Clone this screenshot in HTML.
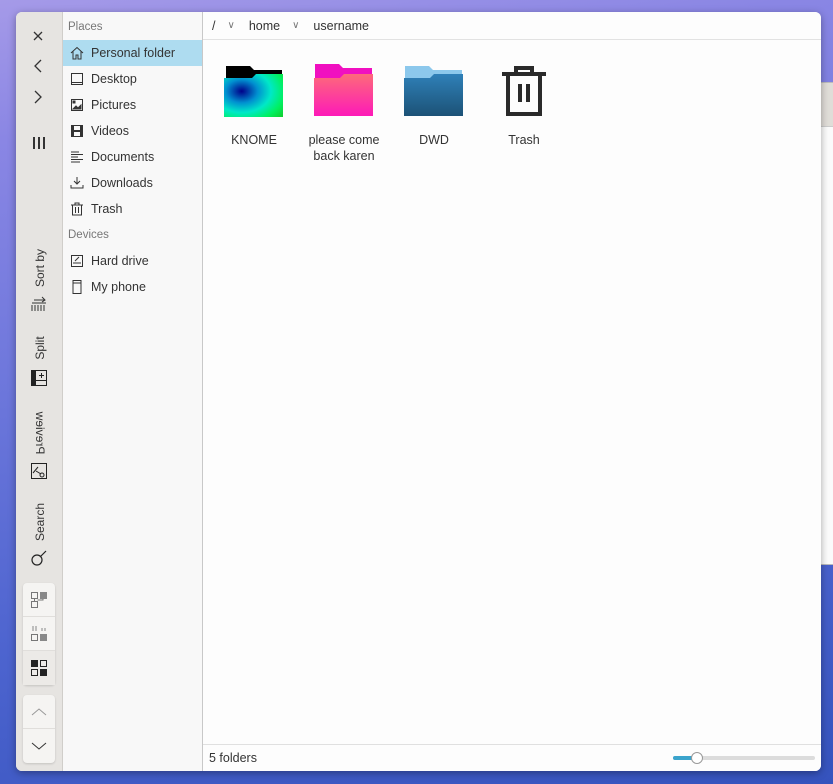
<!DOCTYPE html>
<html><head><meta charset="utf-8"><style>
*{box-sizing:border-box;margin:0;padding:0}
body{width:833px;height:784px;overflow:hidden;position:relative;font-family:"Liberation Sans","DejaVu Sans",sans-serif;font-size:12.5px;color:#333;
background:linear-gradient(170deg,#a59ae8 0%,#8a86e4 15%,#6f78dc 40%,#4d64cf 70%,#3553bd 100%);}
.bgwin{position:absolute;left:818px;top:82px;width:20px;height:483px;background:#fbfbfb;border:1px solid #bbb}
.bgwin .h{height:44px;background:#e0ddd8;border-bottom:1px solid #ccc}
.win{position:absolute;left:16px;top:12px;width:805px;height:759px;border-radius:6px;overflow:hidden;background:#fdfdfd;box-shadow:0 2px 8px rgba(0,0,0,.35)}
.tb{position:absolute;left:0;top:0;width:47px;height:100%;background:#e6e4e1;border-right:1px solid #d0ceca}
.side{position:absolute;left:47px;top:0;width:140px;height:100%;background:#f8f8f8;border-right:1px solid #c8c8c8}
.main{position:absolute;left:187px;top:0;right:0;bottom:0;background:#fdfdfd}
.sec{color:#777;font-size:11.5px;padding:9px 0 0 5px;height:28px}
.it{height:26px;display:flex;align-items:center;padding-left:7px;font-size:12.5px}
.it.sel{background:#aedcf0}
.it svg{width:14px;height:14px;margin-right:7px}
.vt{position:absolute;left:24px;transform:translate(-50%,-50%) rotate(-90deg);white-space:nowrap;font-size:12px;color:#333}
.ic{position:absolute;left:15px}
.grp{position:absolute;left:7px;width:32px;background:#f5f4f2;border-radius:4px;box-shadow:0 1px 2px rgba(0,0,0,.15)}
.grp div{height:34px;border-bottom:1px solid #e0dedb;display:flex;align-items:center;justify-content:center}
.crumb{height:28px;border-bottom:1px solid #e2e2e2;display:flex;align-items:center;font-size:12.5px;padding-left:9px}
.f{position:absolute;top:52px;width:80px;text-align:center;font-size:12.5px;line-height:16px}
.status{position:absolute;left:0;right:0;bottom:0;height:27px;border-top:1px solid #e0e0e0;font-size:12.5px;padding:6px 0 0 6px}
</style></head><body>
<div class="bgwin"><div class="h"></div></div>
<div class="win">
 <div class="tb">
  <svg class="ic" style="top:17px" width="14" height="14" viewBox="0 0 14 14" stroke="#333" stroke-width="1.3"><path d="M3 3L11 11M11 3L3 11"/></svg>
  <svg class="ic" style="top:46px" width="14" height="16" viewBox="0 0 14 16" fill="none" stroke="#333" stroke-width="1.3"><path d="M10 2L4 8L10 14"/></svg>
  <svg class="ic" style="top:77px" width="14" height="16" viewBox="0 0 14 16" fill="none" stroke="#333" stroke-width="1.3"><path d="M4 2L10 8L4 14"/></svg>
  <svg class="ic" style="top:124px" width="16" height="14" viewBox="0 0 16 14" stroke="#333" stroke-width="2"><path d="M3 1V13M8 1V13M13 1V13"/></svg>
  <div class="vt" style="top:256px">Sort by</div>
  <svg class="ic" style="top:284px" width="16" height="16" viewBox="0 0 16 16" fill="none" stroke="#333" stroke-width="1"><path d="M1 7H15M1 9V15M4 9V15M7 9V15M10 9V15M13 9V15M3 4H14M11 1L14 4L11 6"/></svg>
  <div class="vt" style="top:336px">Split</div>
  <svg class="ic" style="top:358px" width="16" height="16" viewBox="0 0 16 16"><rect x="0.5" y="0.5" width="15" height="15" fill="none" stroke="#222"/><rect x="0" y="0" width="5" height="16" fill="#222"/><rect x="0" y="10" width="16" height="1" fill="#222"/><path d="M10.5 3V8M8 5.5H13" stroke="#222"/></svg>
  <div class="vt" style="top:421px;transform:translate(-50%,-50%) rotate(90deg) scaleX(-1)">Preview</div>
  <svg class="ic" style="top:451px" width="16" height="16" viewBox="0 0 16 16" fill="none" stroke="#222"><rect x="0.5" y="0.5" width="15" height="15"/><path d="M2 10L7 4M5 8L10 11"/><circle cx="11" cy="12" r="2"/></svg>
  <div class="vt" style="top:510px">Search</div>
  <svg class="ic" style="top:538px" width="16" height="16" viewBox="0 0 16 16" fill="none" stroke="#222" stroke-width="1.2"><circle cx="6" cy="10" r="5"/><path d="M9.5 6.5L15 1"/></svg>
  <div class="grp" style="top:571px">
   <div><svg width="16" height="16" viewBox="0 0 16 16"><rect x="0.5" y="0.5" width="6" height="6" fill="none" stroke="#777"/><rect x="9" y="0" width="7" height="7" fill="#888"/><rect x="0.5" y="9.5" width="6" height="6" fill="none" stroke="#777"/><path d="M3.5 7V9M6.5 8H12V7" stroke="#777" fill="none"/></svg></div>
   <div><svg width="16" height="16" viewBox="0 0 16 16"><path d="M2 0V5M5 0V5M11 2V5M14 2V5" stroke="#888"/><rect x="0.5" y="8.5" width="6" height="6" fill="none" stroke="#777"/><rect x="9" y="8" width="7" height="7" fill="#888"/></svg></div>
   <div style="border:none;background:#eceae7"><svg width="16" height="16" viewBox="0 0 16 16"><rect x="0" y="0" width="7" height="7" fill="#222"/><rect x="9.5" y="0.5" width="6" height="6" fill="none" stroke="#222"/><rect x="0.5" y="9.5" width="6" height="6" fill="none" stroke="#222"/><rect x="9" y="9" width="7" height="7" fill="#222"/></svg></div>
  </div>
  <div class="grp" style="top:683px">
   <div><svg width="16" height="10" viewBox="0 0 16 10" fill="none" stroke="#999"><path d="M1 8L8 2L15 8"/></svg></div>
   <div style="border:none"><svg width="16" height="10" viewBox="0 0 16 10" fill="none" stroke="#333"><path d="M1 2L8 8L15 2"/></svg></div>
  </div>
 </div>
 <div class="side">
  <div class="sec">Places</div>
  <div class="it sel"><svg viewBox="0 0 14 14" fill="none" stroke="#333"><path d="M1 7L7 1.5L13 7M3 5.5V13H6V9H8V13H11V5.5"/></svg>Personal folder</div>
  <div class="it"><svg viewBox="0 0 14 14" fill="none" stroke="#333"><rect x="1.5" y="1.5" width="11" height="11"/><path d="M1.5 10.5H12.5"/></svg>Desktop</div>
  <div class="it"><svg viewBox="0 0 14 14" fill="none" stroke="#333"><rect x="1.5" y="1.5" width="11" height="11"/><path d="M3 11L6 8L8 10L11 7V11Z" fill="#333"/><rect x="3" y="3" width="2" height="2" fill="#333"/></svg>Pictures</div>
  <div class="it"><svg viewBox="0 0 14 14"><rect x="1" y="1" width="12" height="12" fill="#333"/><rect x="4" y="2" width="6" height="4" fill="#f8f8f8"/><rect x="4" y="8" width="6" height="4" fill="#f8f8f8"/></svg>Videos</div>
  <div class="it"><svg viewBox="0 0 14 14" stroke="#333"><path d="M1 2H9M1 4.5H13M1 7H8M1 9.5H13M1 12H10"/></svg>Documents</div>
  <div class="it"><svg viewBox="0 0 14 14" fill="none" stroke="#333"><path d="M7 1V8M4 5L7 8L10 5M1 9V12H13V9"/></svg>Downloads</div>
  <div class="it"><svg viewBox="0 0 14 14" fill="none" stroke="#333"><path d="M1 3H13M5 3V1H9V3M2.5 3V13H11.5V3M5.5 5V11M8.5 5V11"/></svg>Trash</div>
  <div class="sec" style="padding-top:7px;height:26px">Devices</div>
  <div class="it"><svg viewBox="0 0 14 14" fill="none" stroke="#333"><rect x="1.5" y="1.5" width="11" height="11"/><path d="M3 9H11M5 7L9 3"/></svg>Hard drive</div>
  <div class="it"><svg viewBox="0 0 14 14" fill="none" stroke="#333"><rect x="3" y="0.5" width="8" height="13"/><path d="M3 3H11"/></svg>My phone</div>
 </div>
 <div class="main">
  <div class="crumb"><span>/</span><span style="margin:0 14px 0 12px;color:#777;font-size:10px">&#8744;</span><span>home</span><span style="margin:0 14px 0 12px;color:#777;font-size:10px">&#8744;</span><span>username</span></div>
  <div class="f" style="left:11px">
   <svg width="60" height="54" viewBox="0 0 60 54"><defs><radialGradient id="k" cx="0.3" cy="0.4" r="0.9"><stop offset="0" stop-color="#00008a"/><stop offset="0.3" stop-color="#0090d0"/><stop offset="0.55" stop-color="#00e8c8"/><stop offset="0.8" stop-color="#00f060"/><stop offset="1" stop-color="#10d030"/></radialGradient></defs><path d="M2 2H26L30 6H58V18H2Z" fill="#000"/><path d="M0 14H28L32 10H59V53H0Z" fill="url(#k)"/></svg>
   <div style="margin-top:10px">KNOME</div></div>
  <div class="f" style="left:101px">
   <svg width="60" height="54" viewBox="0 0 60 54"><defs><linearGradient id="p" x1="0" y1="0" x2="0" y2="1"><stop offset="0" stop-color="#fd6a7a"/><stop offset="1" stop-color="#fd1ab8"/></linearGradient></defs><path d="M1 0H25L29 4H58V18H1Z" fill="#f010c0"/><path d="M0 14H26L30 10H59V52H0Z" fill="url(#p)"/></svg>
   <div style="margin-top:10px">please come<br>back karen</div></div>
  <div class="f" style="left:191px">
   <svg width="60" height="54" viewBox="0 0 60 54"><defs><linearGradient id="d" x1="0" y1="0" x2="0" y2="1"><stop offset="0" stop-color="#2f80b8"/><stop offset="1" stop-color="#1c5276"/></linearGradient></defs><path d="M1 2H25L29 6H58V18H1Z" fill="#8cc8ec"/><path d="M0 14H26L30 10H59V52H0Z" fill="url(#d)"/></svg>
   <div style="margin-top:10px">DWD</div></div>
  <div class="f" style="left:281px">
   <svg width="60" height="54" viewBox="0 0 60 54" fill="none" stroke="#2a2a2a" stroke-width="4"><path d="M8 10H52M22 10V4H38V10M14 10V50H46V10"/><path d="M26 20V38M34 20V38"/></svg>
   <div style="margin-top:10px">Trash</div></div>
  <div class="status">5 folders
   <div style="position:absolute;left:470px;top:11px;width:142px;height:4px;background:#dcdcdc;border-radius:2px"></div>
   <div style="position:absolute;left:470px;top:11px;width:24px;height:4px;background:#3ba4cc;border-radius:2px"></div>
   <div style="position:absolute;left:488px;top:7px;width:12px;height:12px;background:#fff;border:1px solid #999;border-radius:50%"></div>
  </div>
 </div>
</div>
</body></html>
